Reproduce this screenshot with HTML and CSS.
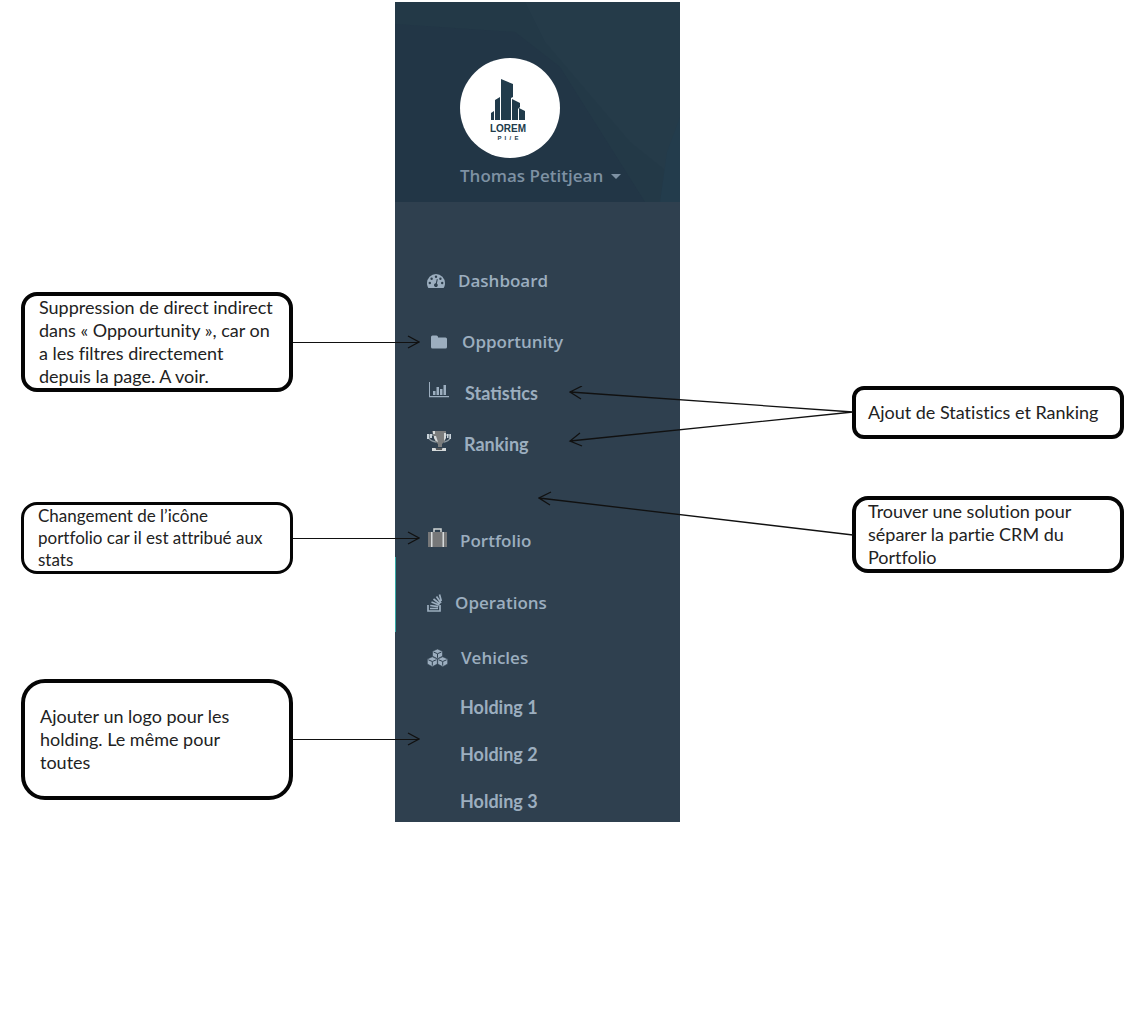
FILE: index.html
```html
<!DOCTYPE html>
<html lang="fr">
<head>
<meta charset="utf-8">
<title>Navigation – annotations</title>
<link rel="stylesheet" href="styles.css">
</head>
<body>
<main class="board">
  <section class="notes notes-left">
    <div class="callout">
      <p class="note">Suppression de direct indirect<br>dans « Oppourtunity », car on<br>a les filtres directement<br>depuis la page. A voir.</p>
      <div class="arrow"><svg width="13" height="14" viewBox="0 0 13 14"><path d="M1 1 12 7 1 13"/></svg></div>
    </div>
    <div class="callout">
      <p class="note compact">Changement de l’icône<br>portfolio car il est attribué aux<br>stats</p>
      <div class="arrow"><svg width="13" height="14" viewBox="0 0 13 14"><path d="M1 1 12 7 1 13"/></svg></div>
    </div>
    <div class="callout">
      <p class="note roomy">Ajouter un logo pour les<br>holding. Le même pour<br>toutes</p>
      <div class="arrow"><svg width="13" height="14" viewBox="0 0 13 14"><path d="M1 1 12 7 1 13"/></svg></div>
    </div>
  </section>

  <aside class="sidebar">
    <header class="profile">
      <svg class="facets" viewBox="0 0 285 200" preserveAspectRatio="none" aria-hidden="true">
        <path fill="#253b49" d="M130 0H285V180L235 140 150 40Z"/>
        <path fill="#223646" d="M0 22 120 30 165 65 250 200H0Z"/>
        <path fill="#233c4c" d="M285 115V200H265L272 150Z"/>
      </svg>
      <div class="avatar">
        <svg width="36" height="42" viewBox="0 0 36 42" aria-hidden="true">
          <path fill="#213b4b" d="M11 0 23 5V18L21 19V41H11ZM5 21 10 18V41H5ZM1 34 4 32V41H1ZM22 20 30 24V28L28 30V41H22ZM29 29 35 32V41H29Z"/>
        </svg>
        <span class="brand">LOREM</span>
        <span class="tagline">P  I  /  E</span>
      </div>
      <button class="user" type="button">Thomas Petitjean <span class="caret"></span></button>
    </header>

    <nav class="menu">
      <ul class="group">
        <li><a href="#dashboard"><svg width="18" height="16" viewBox="0 0 18 16"><path fill="currentColor" d="M9 1a9 9 0 0 0-9 9c0 2 .5 3.600 1.400 5h15.200c.9-1.400 1.400-3 1.400-5a9 9 0 0 0-9-9Z"/><g fill="#2f404f"><circle cx="2.800" cy="10" r="1.200"/><circle cx="4.600" cy="5.700" r="1.200"/><circle cx="9" cy="3.800" r="1.200"/><circle cx="13.400" cy="5.700" r="1.200"/><circle cx="15.200" cy="10" r="1.200"/><path d="m9.800 6 1 .3-.9 4.300a1.900 1.900 0 1 1-1.100-.3Z"/></g></svg>Dashboard</a></li>
        <li class="gap-xl"><a href="#opportunity"><svg width="22" height="16" viewBox="0 0 22 16"><path fill="currentColor" d="M4 3q0-1.500 1.500-1.500h4q1.500 0 1.500 1.500v.5h7.500q1.500 0 1.500 1.500v8q0 1.500-1.500 1.500h-13Q4 14.500 4 13Z"/></svg>Opportunity</a></li>
        <li class="alt gap-m"><a href="#statistics"><svg class="raised" width="25" height="16" viewBox="0 0 25 16"><path fill="currentColor" d="M2 0h1v14h19v1.300H2ZM6 9h2.500v4H6ZM9.500 5H12v8H9.500ZM13 7h2.500v6H13ZM16.500 3H19v10h-2.500Z"/></svg>Statistics</a></li>
        <li class="alt gap-m"><a href="#ranking"><svg class="raised" width="24" height="20" viewBox="0 0 24 20"><path fill="none" stroke="#8b979f" stroke-width="1.500" d="M7 4H2v3q1 3 7 4M19 4h4v3q-1 3-6 4"/><path fill="#c9d3da" d="M0 3h2v5H0ZM3 3h2v4H3ZM20 3h1.500v4H20ZM22.500 3H24v5h-1.500Z"/><path fill="#7b7d7d" d="M5 0h14v7q-1 4-4 6v3h-4v-3Q8 11 7 7Z"/><path fill="#d4d9da" d="M6 0h2v3H6ZM7 5h2l2 6Q8 10 7 7ZM17 2h2v5l-2 3ZM5 17h3l2 1h4l2-1h3v3H5Z"/><path fill="#56585a" d="M9 17h6v2H9Z"/></svg>Ranking</a></li>
      </ul>
      <ul class="group">
        <li><a href="#portfolio"><svg class="raised" width="20" height="20" viewBox="0 0 20 20"><path fill="none" stroke="#d1d5d5" stroke-width="1.500" d="M7 5V1h7v4"/><path fill="#777879" d="M1 4h19v15H1Z"/><path fill="#d8dcdd" d="M4 4h1.500v15H4ZM15.500 4H17v15h-1.500Z"/></svg>Portfolio</a></li>
        <li class="gap-xxl current"><a href="#operations"><svg width="15" height="18" viewBox="0 0 15 18"><path fill="none" stroke="currentColor" stroke-width="1.700" d="M1 11v6h12v-6M3 14.500h8M3.200 11.500l8 1.200M4.500 8l7.500 3M6.500 5l6.500 5M9.500 2.500 14 9M12.500.5 14.300 7"/></svg>Operations</a></li>
        <li class="gap-l"><a href="#vehicles"><svg width="21" height="18" viewBox="0 0 21 18"><g fill="currentColor" stroke="#2f404f" stroke-width=".6"><path d="m10.500 0 5 2.200v5l-5 2.500-5-2.500v-5Z"/><path d="m5.300 7.800 5 2.200v5l-5 2.700-5-2.700v-5ZM15.700 7.800l5 2.200v5l-5 2.700-5-2.700v-5Z"/></g><path fill="none" stroke="#2f404f" d="m6.500 3 4 1.700 4-1.700m-4 2v3.800M1.300 10.800l4 1.700 4-1.700m-4 2v3.800M11.700 10.800l4 1.700 4-1.700m-4 2v3.800"/></svg>Vehicles</a>
          <ul class="holdings alt">
            <li><a href="#holding-1">Holding 1</a></li>
            <li><a href="#holding-2">Holding 2</a></li>
            <li><a href="#holding-3">Holding 3</a></li>
          </ul>
        </li>
      </ul>
    </nav>
  </aside>

  <section class="notes notes-right">
    <svg class="links" viewBox="0 0 315 152" preserveAspectRatio="none" aria-hidden="true">
      <path d="M315 26 32 6M44 0 32 6 43 13M315 26 32 55M42 47 32 55 44 60M315 149 1 112M13 106 1 112 12 119"/>
    </svg>
    <p class="note single">Ajout de Statistics et Ranking</p>
    <p class="note">Trouver une solution pour<br>séparer la partie CRM du<br>Portfolio</p>
  </section>
</main>
</body>
</html>
```
FILE: styles.css
```css
* { box-sizing: border-box; }

body {
  margin: 0;
  background: #fff;
  color: #222;
  font-family: Lato, "Liberation Sans", sans-serif;
  font-variant-ligatures: none;
}

ul, p { margin: 0; padding: 0; }
ul { list-style: none; }

.board {
  display: grid;
  grid-template-columns: minmax(350px, 395fr) 285px minmax(420px, 468fr);
  align-items: start;
  padding-top: 2px;
}

/* Annotations */
.notes {
  position: relative;
  z-index: 1;
  display: flex;
  flex-direction: column;
}

.notes-left { padding: 290px 0 0 21px; gap: 105px; }
.notes-right { padding: 384px 24px 0 0; gap: 57px; align-items: flex-end; }

.callout { display: flex; align-items: center; }
.callout:nth-child(2) { margin-top: 5px; }

.note {
  flex: none;
  width: 272px;
  padding: 0 12px;
  border: 4px solid #050505;
  border-radius: 16px;
  background: #fff;
  font-size: 18px;
  line-height: 23px;
  white-space: nowrap;
}

.callout .note { padding: 0 14px; }
.callout .compact { border-width: 3px; font-size: 17px; line-height: 22px; }
.callout .roomy { padding: 22px 15px; border-radius: 24px; }
.notes-right .single { padding: 11px 12px; border-radius: 12px; }

.arrow {
  position: relative;
  flex: 1;
  height: 1px;
  margin-right: -24px;
  background: #111;
}

.arrow svg { position: absolute; top: -7px; right: -1px; }

.arrow path, .links path {
  fill: none;
  stroke: #111;
  stroke-width: 1.3;
  vector-effect: non-scaling-stroke;
}

.links {
  position: absolute;
  top: 384px;
  left: -142px;
  width: calc(100% - 153px);
  height: 152px;
}

/* Sidebar */
.sidebar { background: #2f404f; color: #9caebf; }

.profile {
  position: relative;
  display: flex;
  flex-direction: column;
  align-items: flex-start;
  height: 200px;
  padding: 56px 0 0 65px;
  background: #233947;
}

.facets { position: absolute; inset: 0; width: 100%; height: 100%; }

.avatar {
  position: relative;
  display: flex;
  flex-direction: column;
  align-items: center;
  width: 100px;
  height: 100px;
  padding-top: 21px;
  padding-right: 4px;
  border-radius: 50%;
  background: #fff;
  color: #213b4b;
}

.brand { font: 700 10px/12px "Liberation Sans", sans-serif; margin-top: 2px; }
.tagline { font: 700 6px/6px "Liberation Sans", sans-serif; white-space: pre; }

.user {
  position: relative;
  display: flex;
  align-items: center;
  gap: 8px;
  margin-top: 6px;
  padding: 0;
  border: 0;
  background: none;
  color: #7e91a3;
  font: 600 17px/24px "Open Sans", sans-serif;
}

.caret {
  border: 5px solid transparent;
  border-top-color: currentColor;
  border-bottom: 0;
}

.menu { padding: 67px 0 9px; font: 600 17px/24px "Open Sans", sans-serif; }
.group + .group { margin-top: 73px; }

.menu a {
  display: flex;
  align-items: center;
  gap: 13px;
  height: 24px;
  padding-left: 32px;
  color: inherit;
  text-decoration: none;
}

.menu .alt { font-family: Lato, sans-serif; font-size: 18px; font-weight: 700; }
.gap-m { margin-top: 27px; }
.gap-l { margin-top: 31px; }
.gap-xl { margin-top: 37px; }
.gap-xxl { margin-top: 38px; }
.raised { margin-bottom: 6px; }

.current { position: relative; }
.current::before {
  content: "";
  position: absolute;
  top: -34px;
  left: 0;
  width: 1px;
  height: 75px;
  background: #35a8a5;
}

.holdings { display: grid; gap: 23px; padding-top: 25px; }
.holdings a { padding-left: 65px; }
```
